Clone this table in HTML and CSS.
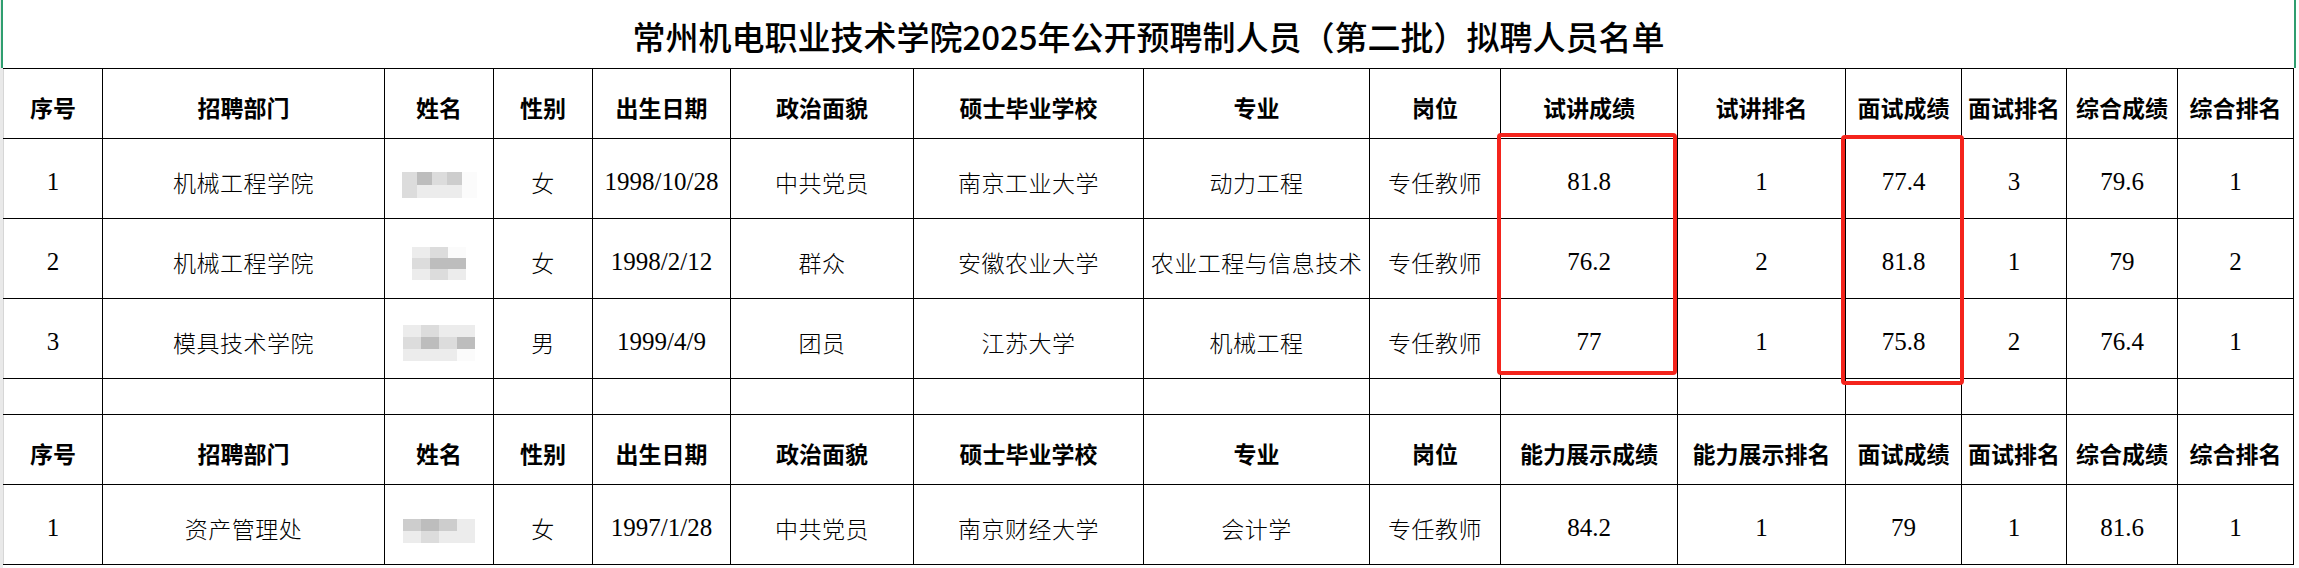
FILE: index.html
```html
<!DOCTYPE html>
<html lang="zh-CN">
<head>
<meta charset="utf-8">
<title>拟聘人员名单</title>
<link rel="stylesheet" href="styles.css">
</head>
<body>
<div class="page">
  <div class="title">常州机电职业技术学院2025年公开预聘制人员（第二批）拟聘人员名单</div>
  <table class="grid">
    <colgroup>
      <col class="c1"><col class="c2"><col class="c3"><col class="c4"><col class="c5">
      <col class="c6"><col class="c7"><col class="c8"><col class="c9"><col class="c10">
      <col class="c11"><col class="c12"><col class="c13"><col class="c14"><col class="c15">
    </colgroup>
    <tr class="head">
      <td>序号</td><td>招聘部门</td><td>姓名</td><td>性别</td><td>出生日期</td>
      <td>政治面貌</td><td>硕士毕业学校</td><td>专业</td><td>岗位</td><td>试讲成绩</td>
      <td>试讲排名</td><td>面试成绩</td><td>面试排名</td><td>综合成绩</td><td>综合排名</td>
    </tr>
    <tr class="data">
      <td class="num">1</td><td>机械工程学院</td>
      <td><span class="mosaic m5x2"><i class="p2"></i><i class="p4"></i><i class="p2"></i><i class="p3"></i><i class="p0"></i><i class="p2"></i><i class="p1"></i><i class="p1"></i><i class="p1"></i><i class="p0"></i></span></td>
      <td>女</td><td class="num">1998/10/28</td>
      <td>中共党员</td><td>南京工业大学</td><td>动力工程</td><td>专任教师</td><td class="num">81.8</td>
      <td class="num">1</td><td class="num">77.4</td><td class="num">3</td><td class="num">79.6</td><td class="num">1</td>
    </tr>
    <tr class="data">
      <td class="num">2</td><td>机械工程学院</td>
      <td><span class="mosaic m3x3"><i class="p1"></i><i class="p2"></i><i class="p0"></i><i class="p2"></i><i class="p4"></i><i class="p4"></i><i class="p1"></i><i class="p2"></i><i class="p1"></i></span></td>
      <td>女</td><td class="num">1998/2/12</td>
      <td>群众</td><td>安徽农业大学</td><td>农业工程与信息技术</td><td>专任教师</td><td class="num">76.2</td>
      <td class="num">2</td><td class="num">81.8</td><td class="num">1</td><td class="num">79</td><td class="num">2</td>
    </tr>
    <tr class="data">
      <td class="num">3</td><td>模具技术学院</td>
      <td><span class="mosaic m4x3"><i class="p1"></i><i class="p2"></i><i class="p1"></i><i class="p1"></i><i class="p2"></i><i class="p4"></i><i class="p2"></i><i class="p4"></i><i class="p1"></i><i class="p1"></i><i class="p1"></i><i class="p0"></i></span></td>
      <td>男</td><td class="num">1999/4/9</td>
      <td>团员</td><td>江苏大学</td><td>机械工程</td><td>专任教师</td><td class="num">77</td>
      <td class="num">1</td><td class="num">75.8</td><td class="num">2</td><td class="num">76.4</td><td class="num">1</td>
    </tr>
    <tr class="gap">
      <td></td><td></td><td></td><td></td><td></td><td></td><td></td><td></td>
      <td></td><td></td><td></td><td></td><td></td><td></td><td></td>
    </tr>
    <tr class="head">
      <td>序号</td><td>招聘部门</td><td>姓名</td><td>性别</td><td>出生日期</td>
      <td>政治面貌</td><td>硕士毕业学校</td><td>专业</td><td>岗位</td><td>能力展示成绩</td>
      <td>能力展示排名</td><td>面试成绩</td><td>面试排名</td><td>综合成绩</td><td>综合排名</td>
    </tr>
    <tr class="data">
      <td class="num">1</td><td>资产管理处</td>
      <td><span class="mosaic m4x2"><i class="p3"></i><i class="p4"></i><i class="p3"></i><i class="p1"></i><i class="p1"></i><i class="p2"></i><i class="p1"></i><i class="p1"></i></span></td>
      <td>女</td><td class="num">1997/1/28</td>
      <td>中共党员</td><td>南京财经大学</td><td>会计学</td><td>专任教师</td><td class="num">84.2</td>
      <td class="num">1</td><td class="num">79</td><td class="num">1</td><td class="num">81.6</td><td class="num">1</td>
    </tr>
  </table>
  <div class="mark mark-a"></div>
  <div class="mark mark-b"></div>
</div>
</body>
</html>
```

FILE: styles.css
```css
html, body {
  margin: 0;
  padding: 0;
  background: #ffffff;
}

.page {
  position: relative;
  width: 2296px;
  height: 568px;
  border-left: 3px solid #e9e9e9;
  box-sizing: border-box;
  font-family: "Liberation Serif", "Noto Sans CJK SC", serif;
  color: #000;
}

.title {
  margin-left: -2px;
  width: 2291px;
  height: 64px;
  border-left: 2px solid #2f9e6f;
  border-right: 2px solid #2f9e6f;
  display: flex;
  align-items: center;
  justify-content: center;
  padding-top: 4px;
  box-sizing: content-box;
  font-family: "Noto Sans CJK SC", sans-serif;
  font-size: 33px;
  font-weight: 500;
  color: #000;
}

.grid {
  border-collapse: collapse;
  table-layout: fixed;
  width: 2291px;
}

.c1 { width: 99px; }
.c2 { width: 282px; }
.c3 { width: 109px; }
.c4 { width: 99px; }
.c5 { width: 138px; }
.c6 { width: 183px; }
.c7 { width: 230px; }
.c8 { width: 226px; }
.c9 { width: 131px; }
.c10 { width: 177px; }
.c11 { width: 168px; }
.c12 { width: 116px; }
.c13 { width: 105px; }
.c14 { width: 111px; }
.c15 { width: 116px; }

.grid td {
  border: 1px solid #000;
  padding: 6px 0 0 0;
  text-align: center;
  vertical-align: middle;
  white-space: nowrap;
  overflow: hidden;
  font-size: 23px;
  font-weight: 300;
  font-family: "Noto Sans CJK SC", sans-serif;
  color: #000;
  letter-spacing: 0.5px;
}

.grid td:first-child {
  border-left-color: #d6d6d6;
}

.grid td.num {
  font-family: "Liberation Serif", serif;
  font-size: 25px;
  font-weight: 400;
  letter-spacing: 0;
}

.head { height: 70px; }
.data { height: 80px; }
.gap { height: 36px; }

.grid .head td {
  font-weight: 700;
  letter-spacing: 0;
}

.mosaic {
  display: inline-grid;
  vertical-align: middle;
}

.mosaic i {
  display: block;
}

.m5x2 { grid-template-columns: repeat(5, 15px); grid-auto-rows: 13px; }
.m3x3 { grid-template-columns: repeat(3, 18px); grid-auto-rows: 11px; }
.m4x3 { grid-template-columns: repeat(4, 18px); grid-auto-rows: 12px; }
.m4x2 { grid-template-columns: repeat(4, 18px); grid-auto-rows: 12px; }

.p0 { background: #fbfbfb; }
.p1 { background: #ececec; }
.p2 { background: #dcdcdc; }
.p3 { background: #cdcdcd; }
.p4 { background: #bdbdbd; }

.mark {
  position: absolute;
  border: 4px solid #f4241c;
  border-radius: 4px;
  box-sizing: border-box;
}

.mark-a {
  left: 1494px;
  top: 133px;
  width: 180px;
  height: 242px;
}

.mark-b {
  left: 1838px;
  top: 135px;
  width: 123px;
  height: 250px;
}
```
